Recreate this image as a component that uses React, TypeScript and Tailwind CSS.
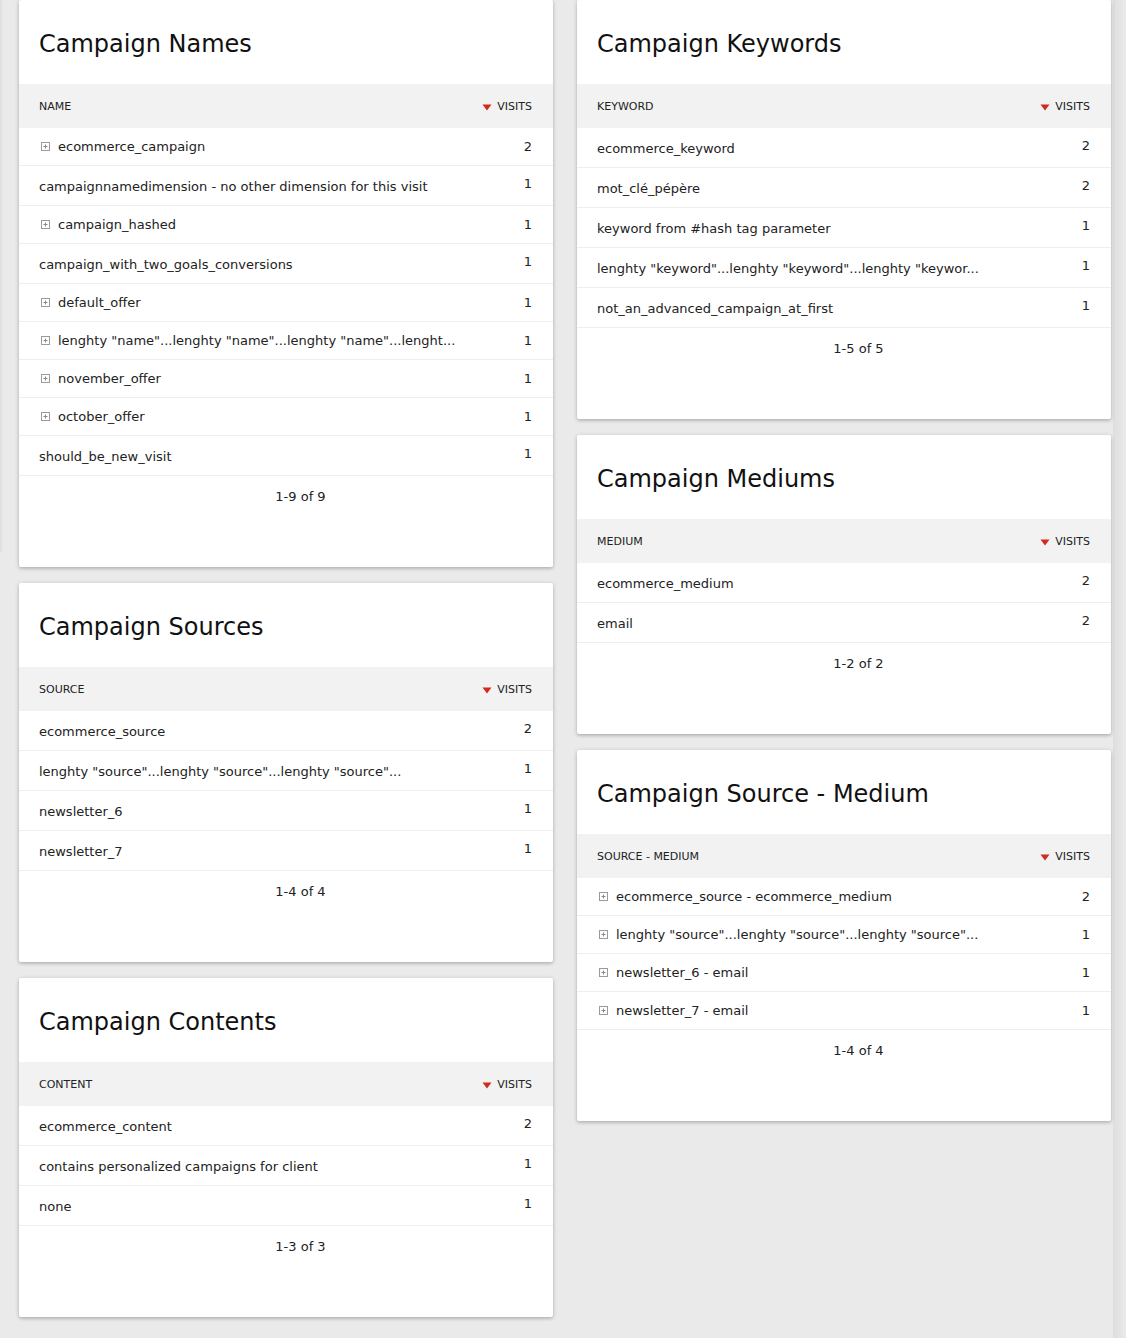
import React from "react";

type Row = { label: string; value: number; icon?: boolean };
type Card = { title: string; col: string; rows: Row[]; pager: string };

const PlusIcon = () => (
  <svg width="9" height="9" viewBox="0 0 9 9" className="shrink-0">
    <rect x="0.5" y="0.5" width="8" height="8" fill="none" stroke="#9a9a9a" strokeWidth="1" />
    <path d="M4.5 2.5v4M2.5 4.5h4" stroke="#8a8a8a" strokeWidth="1" />
  </svg>
);

const SortIcon = () => (
  <svg width="10" height="7" viewBox="0 0 10 7" className="shrink-0">
    <path d="M0.5 0.5h9L5 6.5z" fill="#d4291f" />
  </svg>
);

const CardView = ({ card }: { card: Card }) => (
  <div className="bg-white rounded-[2px] shadow-[0_1px_4px_rgba(0,0,0,0.22),0_2px_3px_rgba(0,0,0,0.08)]">
    <div className="h-[84px] flex items-center pl-[20px] pt-[4px]">
      <h2 className="text-[24px] leading-[28px] text-[#111]">{card.title}</h2>
    </div>
    <div className="h-[44px] bg-[#f2f2f2] flex items-center justify-between pl-[20px] pr-[21px] pt-[2px] text-[11px] text-[#222] uppercase">
      <span>{card.col}</span>
      <span className="flex items-center gap-[5px]">
        <SortIcon />
        <span>Visits</span>
      </span>
    </div>
    {card.rows.map((r, i) =>
      r.icon ? (
        <div
          key={i}
          className="h-[38px] flex items-center justify-between border-b border-[#eeeeee] pl-[22px] pr-[21px] text-[13px] text-[#222]"
        >
          <span className="flex items-center gap-[8px] whitespace-nowrap">
            <PlusIcon />
            <span>{r.label}</span>
          </span>
          <span className="pt-[1px]">{r.value}</span>
        </div>
      ) : (
        <div
          key={i}
          className="h-[40px] flex items-center justify-between border-b border-[#eeeeee] pl-[20px] pr-[21px] text-[13px] text-[#222]"
        >
          <span className="whitespace-nowrap pt-[2px]">{r.label}</span>
          <span className="mb-[4px]">{r.value}</span>
        </div>
      )
    )}
    <div className="h-[91px] pt-[12px] pl-[29px] text-center text-[13px] leading-[18px] text-[#222]">{card.pager}</div>
  </div>
);

const left: Card[] = [
  {
    title: "Campaign Names",
    col: "Name",
    pager: "1-9 of 9",
    rows: [
      { label: "ecommerce_campaign", value: 2, icon: true },
      { label: "campaignnamedimension - no other dimension for this visit", value: 1 },
      { label: "campaign_hashed", value: 1, icon: true },
      { label: "campaign_with_two_goals_conversions", value: 1 },
      { label: "default_offer", value: 1, icon: true },
      { label: 'lenghty "name"...lenghty "name"...lenghty "name"...lenght...', value: 1, icon: true },
      { label: "november_offer", value: 1, icon: true },
      { label: "october_offer", value: 1, icon: true },
      { label: "should_be_new_visit", value: 1 },
    ],
  },
  {
    title: "Campaign Sources",
    col: "Source",
    pager: "1-4 of 4",
    rows: [
      { label: "ecommerce_source", value: 2 },
      { label: 'lenghty "source"...lenghty "source"...lenghty "source"...', value: 1 },
      { label: "newsletter_6", value: 1 },
      { label: "newsletter_7", value: 1 },
    ],
  },
  {
    title: "Campaign Contents",
    col: "Content",
    pager: "1-3 of 3",
    rows: [
      { label: "ecommerce_content", value: 2 },
      { label: "contains personalized campaigns for client", value: 1 },
      { label: "none", value: 1 },
    ],
  },
];

const right: Card[] = [
  {
    title: "Campaign Keywords",
    col: "Keyword",
    pager: "1-5 of 5",
    rows: [
      { label: "ecommerce_keyword", value: 2 },
      { label: "mot_clé_pépère", value: 2 },
      { label: "keyword from #hash tag parameter", value: 1 },
      { label: 'lenghty "keyword"...lenghty "keyword"...lenghty "keywor...', value: 1 },
      { label: "not_an_advanced_campaign_at_first", value: 1 },
    ],
  },
  {
    title: "Campaign Mediums",
    col: "Medium",
    pager: "1-2 of 2",
    rows: [
      { label: "ecommerce_medium", value: 2 },
      { label: "email", value: 2 },
    ],
  },
  {
    title: "Campaign Source - Medium",
    col: "Source - Medium",
    pager: "1-4 of 4",
    rows: [
      { label: "ecommerce_source - ecommerce_medium", value: 2, icon: true },
      { label: 'lenghty "source"...lenghty "source"...lenghty "source"...', value: 1, icon: true },
      { label: "newsletter_6 - email", value: 1, icon: true },
      { label: "newsletter_7 - email", value: 1, icon: true },
    ],
  },
];

export default function App() {
  return (
    <div
      className="relative w-[1126px] min-h-[1338px] bg-[#eaeaea] overflow-hidden"
      style={{ fontFamily: '"DejaVu Sans", Verdana, sans-serif' }}
    >
      <div className="absolute left-0 top-0 w-[3px] h-[552px] bg-gradient-to-r from-[#dedede] to-[#e7e7e7]" />
      <div className="absolute right-0 top-0 w-[13px] h-[1338px] bg-gradient-to-r from-[#dedede] to-[#eaeaea]" />
      <div className="relative flex gap-[24px] pl-[19px]">
        <div className="w-[534px] flex flex-col gap-[16px]">
          {left.map((c) => (
            <CardView key={c.title} card={c} />
          ))}
        </div>
        <div className="w-[534px] flex flex-col gap-[16px]">
          {right.map((c) => (
            <CardView key={c.title} card={c} />
          ))}
        </div>
      </div>
    </div>
  );
}
